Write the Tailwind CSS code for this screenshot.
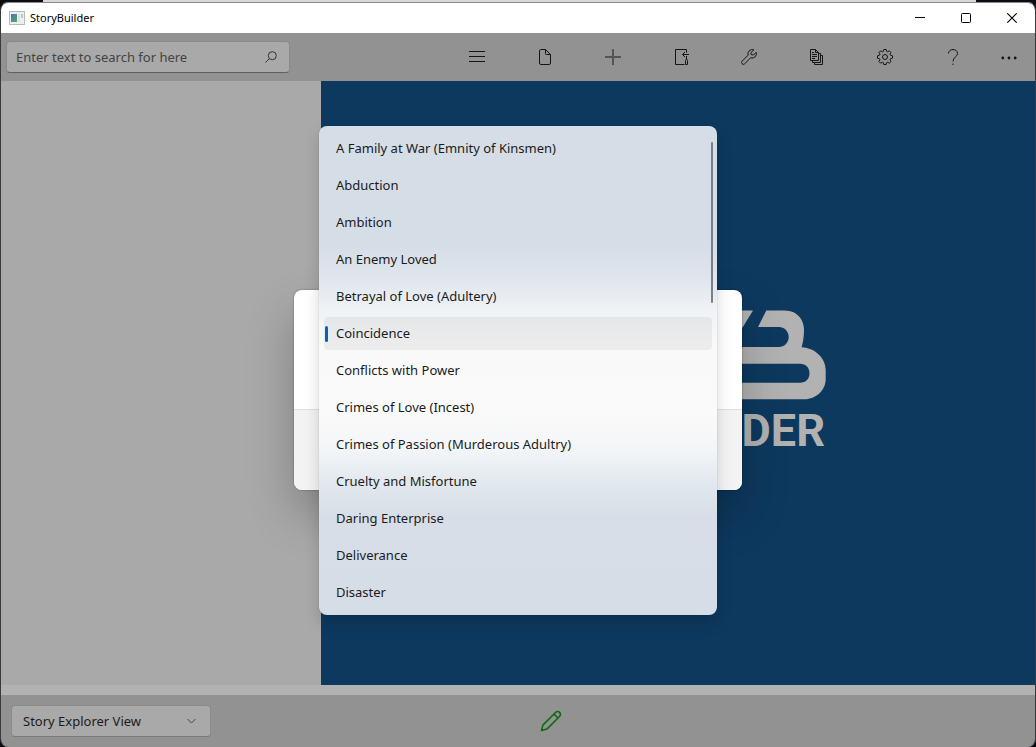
<!DOCTYPE html>
<html lang="en">
<head>
<meta charset="utf-8">
<title>StoryBuilder</title>
<script src="https://cdn.jsdelivr.net/npm/@tailwindcss/browser@4"></script>
</head>
<body class="flex h-screen flex-col overflow-hidden bg-[#0c0d12] font-['Noto_Sans','Open_Sans',sans-serif] text-[13px] text-[#1b1b1b]">

<!-- Desktop behind the window -->
<div class="flex h-[2px] shrink-0 pr-[60px] pl-[43px]"><div class="flex-1 bg-[#d8d8d8]"></div></div>

<div class="relative flex min-h-0 flex-1 flex-col overflow-hidden rounded-lg border-x border-t border-x-[#3a3a3c] border-t-[#8a8a8a]">
  <header class="flex h-[30px] shrink-0 items-center bg-white pl-2">
    <svg class="h-[14px] w-4" viewBox="0 0 16 14" aria-hidden="true">
      <defs><linearGradient id="app" x1="0" y1="0" x2="1" y2="1"><stop offset="0" stop-color="#4a78b4"/><stop offset="1" stop-color="#4fa46c"/></linearGradient></defs>
      <rect x=".5" y=".5" width="15" height="13" fill="#eceef0" stroke="#b5babf"/>
      <rect x="2" y="3" width="6" height="8" fill="url(#app)"/>
      <rect x="9" y="3" width="2" height="8" fill="#dde3e8"/><rect x="12" y="3" width="2" height="4" fill="#a9cfc4"/>
    </svg>
    <h1 class="ml-[5px] text-[11px] text-black">StoryBuilder</h1>
    <div class="ml-auto flex h-full text-black">
      <button class="grid w-[46px] place-items-center" aria-label="Minimize"><svg width="10" height="10" fill="none" stroke="currentColor"><path d="M0 4.500h10"/></svg></button>
      <button class="grid w-[46px] place-items-center" aria-label="Maximize"><svg width="10" height="10" fill="none" stroke="currentColor"><rect x=".5" y=".5" width="9" height="9" rx="1"/></svg></button>
      <button class="grid w-[46px] place-items-center" aria-label="Close"><svg width="10" height="10" fill="none" stroke="currentColor" stroke-width="1.1"><path d="M.3.3l9.4 9.4M9.7.3L.3 9.7"/></svg></button>
    </div>
  </header>

  <div class="flex h-12 shrink-0 items-center bg-[#929292] pr-1 pl-[5px]">
    <form class="flex h-8 w-[284px] items-center rounded-[4px] border border-[#8a8a8a] border-b-[#5f5f5f] bg-[#a9a9a9] pr-3 pl-[9px]">
      <input type="text" aria-label="Search" placeholder="Enter text to search for here" class="min-w-0 flex-1 bg-transparent pt-[2px] outline-none placeholder:text-[#434343]">
      <button type="button" aria-label="Search"><svg width="12" height="12" fill="none" stroke="#333"><circle cx="7.3" cy="4.7" r="4"/><path d="M4.4 7.6L.5 11.5"/></svg></button>
    </form>
    <nav class="ml-auto flex h-full text-[#151515]" aria-label="Commands">
      <button class="grid w-[68px] place-items-center" aria-label="Menu"><svg width="16" height="16" fill="none" stroke="currentColor"><path d="M0 2.5h16M0 7.5h16M0 12.5h16"/></svg></button>
      <button class="grid w-[68px] place-items-center" aria-label="File"><svg width="16" height="16" fill="none" stroke="currentColor"><path d="M3.5.5h5l5 5v8.500a1.500 1.500 0 0 1-1.500 1.500h-8a1.500 1.500 0 0 1-1.500-1.500v-12a1.500 1.500 0 0 1 1-1.500zM8.500.5v4a1 1 0 0 0 1 1h4"/></svg></button>
      <button class="grid w-[68px] place-items-center" aria-label="Add"><svg width="16" height="16" fill="none" stroke="#555" stroke-width="2"><path d="M8 0v16M0 8h16"/></svg></button>
      <button class="grid w-[68px] place-items-center" aria-label="Move"><svg width="16" height="16" fill="none" stroke="currentColor"><path d="M13.500 3.500v-3h-11v15h9M16 5.500H9.500M12 3L9.500 5.500 12 8M13.500 7v3M12.500 15.500v-4l1-1.500 1 1.500v4z"/></svg></button>
      <button class="grid w-[68px] place-items-center" aria-label="Tools"><svg width="16" height="16" fill="none" stroke="currentColor" stroke-linejoin="round"><path d="M12.800.9A4.300 4.300 0 0 0 7.100 6.200L1 12.300a1.700 1.700 0 0 0 0 2.400 1.700 1.700 0 0 0 2.500.2l6.200-6.100A4.300 4.300 0 0 0 15.200 3.300L12.500 6 10.200 5.600 9.900 3.700z"/></svg></button>
      <button class="grid w-[68px] place-items-center" aria-label="Reports"><svg width="16" height="16" fill="none" stroke="currentColor"><path d="M1.500.5h5l3 3v8h-8zM6.500.5v3h3M3 3.500h2M3 5.500h5M3 7.500h5M3 9.500h3M3.500 11.500v2h8v-9h-2M5.500 13.500v2h8v-9h-2"/></svg></button>
      <button class="grid w-[68px] place-items-center" aria-label="Settings"><svg width="16" height="16" fill="none" stroke="currentColor" stroke-linejoin="round"><circle cx="8" cy="8" r="2.500"/><path d="M6.800.5h2.400l.4 1.800 1.100.5 1.600-1 1.700 1.700-1 1.600.5 1.100 2 .6v2.400l-2 .5-.5 1.100 1 1.700-1.700 1.700-1.600-1-1.100.5-.4 1.800H6.800l-.4-1.800-1.100-.5-1.600 1L2 12.500l1-1.700-.5-1.100-2-.5V6.800l2-.6.500-1.100-1-1.600 1.700-1.700 1.600 1 1.100-.5z"/></svg></button>
      <button class="grid w-[68px] place-items-center" aria-label="Help"><svg width="16" height="16" fill="none" stroke="currentColor"><path d="M3.500 4.500c0-5.300 9-5.300 9 0 0 3.500-4.500 3.500-4.500 8M8 14.500V16"/></svg></button>
      <button class="grid w-11 place-items-center" aria-label="More"><svg width="16" height="16" fill="currentColor"><circle cx="1.800" cy="9" r="1.400"/><circle cx="8" cy="9" r="1.400"/><circle cx="14.200" cy="9" r="1.400"/></svg></button>
    </nav>
  </div>

  <main class="flex min-h-0 flex-1">
    <aside class="w-80 shrink-0 bg-[#a9a9a9]"></aside>
    <section class="grid flex-1 place-items-center bg-[#0d395f]">
      <svg class="h-[146px] w-[296px]" viewBox="530 310 296 146" fill="#b2b2b2" role="img" aria-label="StoryBuilder">
        <path d="M700 310.500h53l-10.500 17H700z"/>
        <path fill-rule="evenodd" d="M766.300 310.500H784c15 0 20 11 20 19 0 8-1 12-2.300 17.800 14 1 24 11 24 23v9c0 11-10 20-21 20H640v-52.300H779c5 0 9.700-4 9.700-10s-4.700-10-9.700-10h-21zM640 363.700v19H800c6 0 9.500-4 9.500-9.500s-3.500-9.500-9.500-9.500z"/>
        <text x="825" y="446" text-anchor="end" class="font-['Roboto'] text-[45px] font-bold">BUILDER</text>
      </svg>
    </section>
  </main>

  <div class="h-[10px] shrink-0 bg-[#b2b2b2]"></div>

  <footer class="relative flex h-[52px] shrink-0 items-center bg-[#929292] pl-[10px]">
    <div class="relative">
      <select aria-label="View" class="h-8 w-[200px] appearance-none rounded-[4px] border border-[#8a8a8a] border-b-[#7a7a7a] bg-[#a9a9a9] pt-[2px] pl-[11px]"><option>Story Explorer View</option></select>
      <svg class="pointer-events-none absolute top-3 right-[15px]" width="9" height="8" fill="none" stroke="#444"><path d="M.5 2l4 4 4-4"/></svg>
    </div>
    <button class="ml-[329px]" aria-label="Edit"><svg width="22" height="22" fill="none" stroke="#0c690c" stroke-width="1.500" stroke-linejoin="round"><path d="M1.500 20.500l1.400-5.400L15.500 2.500c3-2.700 6.600 1 4 4L6.900 19.100zM14 4l4 4"/></svg></button>
  </footer>

  <!-- Modal layer, below the title bar -->
  <div class="absolute inset-x-0 top-[30px] bottom-0 grid place-items-center">
    <div role="dialog" aria-label="Select a situation" class="relative flex h-[200px] w-[448px] flex-col rounded-lg bg-white shadow-[0_24px_48px_rgba(0,0,0,0.24),0_0_2px_rgba(0,0,0,0.4)]">
      <div class="flex-1"></div>
      <div class="h-[81px] rounded-b-lg border-t border-[#dedede] bg-[#f3f3f3]"></div>

      <div role="listbox" aria-label="Situations" class="absolute -top-[164px] right-[25px] left-[25px] flex flex-col gap-1 rounded-lg bg-[linear-gradient(#d5dde6_0%,#d5dde6_24%,#dfe5ed_31%,#f0f3f6_38%,#f9f9f9_45%,#fafafa_59%,#f3f6f8_66%,#e2e8ef_73%,#d7dee7_80%,#d5dde6_100%)] px-[5px] py-[6px] shadow-[0_8px_16px_rgba(0,0,0,0.16),0_0_1px_rgba(0,0,0,0.4)]">
        <div class="absolute top-4 right-1 h-[161px] w-[2px] rounded-full bg-[#7b8084]"></div>
        <button role="option" class="flex h-[33px] items-center rounded-[4px] px-3">A Family at War (Emnity of Kinsmen)</button>
        <button role="option" class="flex h-[33px] items-center rounded-[4px] px-3">Abduction</button>
        <button role="option" class="flex h-[33px] items-center rounded-[4px] px-3">Ambition</button>
        <button role="option" class="flex h-[33px] items-center rounded-[4px] px-3">An Enemy Loved</button>
        <button role="option" class="flex h-[33px] items-center rounded-[4px] px-3">Betrayal of Love (Adultery)</button>
        <button role="option" aria-selected="true" class="flex h-[33px] items-center rounded-[4px] bg-black/5 pr-3 pl-px"><span class="mr-2 h-4 w-[3px] rounded-full bg-[#0067c0]"></span>Coincidence</button>
        <button role="option" class="flex h-[33px] items-center rounded-[4px] px-3">Conflicts with Power</button>
        <button role="option" class="flex h-[33px] items-center rounded-[4px] px-3">Crimes of Love (Incest)</button>
        <button role="option" class="flex h-[33px] items-center rounded-[4px] px-3">Crimes of Passion (Murderous Adultry)</button>
        <button role="option" class="flex h-[33px] items-center rounded-[4px] px-3">Cruelty and Misfortune</button>
        <button role="option" class="flex h-[33px] items-center rounded-[4px] px-3">Daring Enterprise</button>
        <button role="option" class="flex h-[33px] items-center rounded-[4px] px-3">Deliverance</button>
        <button role="option" class="flex h-[33px] items-center rounded-[4px] px-3">Disaster</button>
      </div>
    </div>
  </div>
</div>
</body>
</html>
